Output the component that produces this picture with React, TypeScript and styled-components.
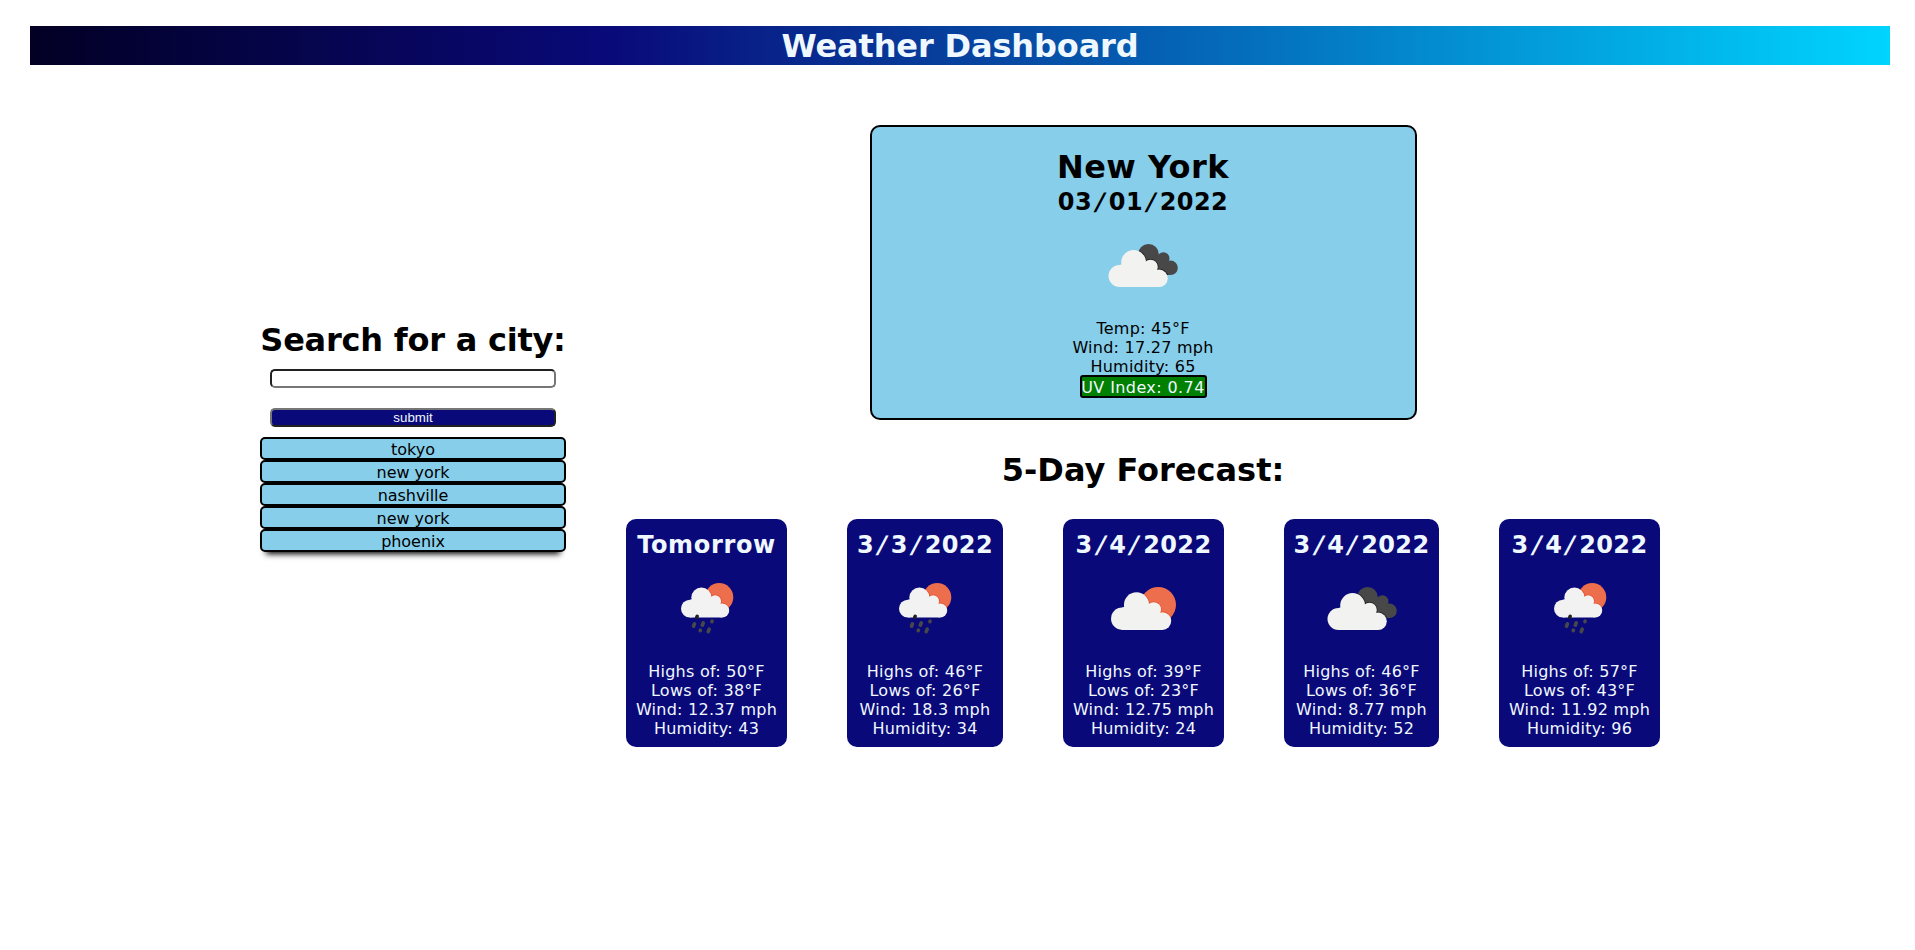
import React, { Fragment } from 'react';
import styled, { createGlobalStyle } from 'styled-components';

const GlobalStyle = createGlobalStyle`
  * { box-sizing: border-box; margin: 0; padding: 0; }
  html { overflow: hidden; }
  body {
    width: 1920px;
    background: #fff;
    color: #000;
    font-family: Verdana, 'DejaVu Sans', sans-serif;
    font-size: 16px;
    line-height: 21px;
  }
`;

const Header = styled.header`
  margin: 26px 30px 30px;
  height: 39px;
  color: aliceblue;
  text-align: center;
  background: linear-gradient(90deg, rgb(2, 0, 36) 0%, rgb(9, 9, 121) 31%, rgb(0, 212, 255) 100%);
`;

const Title = styled.h1<{ $spacing?: number }>`
  height: 39px;
  font-size: 32px;
  line-height: 41px;
  font-weight: bold;
  white-space: nowrap;
  letter-spacing: ${p => p.$spacing ?? 0}px;
`;

const Subtitle = styled.h2<{ $spacing?: number }>`
  height: 29px;
  font-size: 24px;
  line-height: 32px;
  font-weight: bold;
  white-space: nowrap;
  letter-spacing: ${p => p.$spacing ?? 0.4}px;
`;

const Slash = styled.span`
  display: inline-block;
  padding: 0 3.8px;
  transform: skewX(-12deg);
`;

const Main = styled.main`
  display: flex;
  justify-content: center;
  align-items: flex-start;
  gap: 60px;
`;

const Sidebar = styled.aside`
  width: 306px;
  margin-top: 225px;
  text-align: center;
  display: flex;
  flex-direction: column;
`;

const SearchForm = styled.form`
  display: flex;
  flex-direction: column;
  gap: 20px;
  margin: 10px;
`;

const SearchInput = styled.input`
  height: 19px;
  border: 2px inset rgb(118, 118, 118);
  border-radius: 5px;
`;

const SubmitButton = styled.button`
  height: 19px;
  border: 2px outset rgb(118, 118, 118);
  border-radius: 5px;
  background: rgb(9, 9, 121);
  color: aliceblue;
  font: 13.333px/15px Arial, 'Liberation Sans', sans-serif;
`;

const History = styled.ul`
  list-style: none;
  border-radius: 5px;
  box-shadow: 0 8px 6px -6px black;
`;

const HistoryItem = styled.li`
  height: 23px;
  border: 2px solid black;
  border-radius: 5px;
  background: skyblue;
  letter-spacing: -0.05px;
`;

const Content = styled.section`
  display: flex;
  flex-direction: column;
  align-items: center;
  padding-top: 30px;
`;

const CurrentCard = styled.article`
  width: 547px;
  height: 295px;
  padding: 20px;
  border: 2px solid black;
  border-radius: 10px;
  background: skyblue;
  display: flex;
  flex-direction: column;
  align-items: center;
  margin-bottom: 30px;
`;

const UvBadge = styled.p`
  width: 127px;
  height: 23px;
  border: 2px solid black;
  border-radius: 3px;
  background: green;
  color: aliceblue;
  display: flex;
  justify-content: center;
  white-space: nowrap;
  letter-spacing: 0.4px;
`;

const Line = styled.p`
  height: 19px;
  white-space: nowrap;
  letter-spacing: 0.25px;
`;

const Forecast = styled.div`
  display: flex;
  gap: 60px;
  margin-top: 30px;
`;

const DayCard = styled.article<{ $width: number }>`
  width: ${p => p.$width}px;
  height: 228px;
  padding: 10px;
  border-radius: 10px;
  background: rgb(9, 9, 121);
  color: aliceblue;
  display: flex;
  flex-direction: column;
  align-items: center;
`;

const Icon = styled.svg`
  display: block;
  flex: none;
  width: 100px;
  height: 100px;
  margin-bottom: 3px;
`;

type Kind = 'clouds' | 'sun' | 'rain';

function CloudShape() {
  return (
    <>
      <circle cx="26.5" cy="61" r="11" />
      <circle cx="40.6" cy="47.4" r="12.4" />
      <circle cx="57.5" cy="52" r="7.3" />
      <circle cx="66.1" cy="63.3" r="8.7" />
      <path d="M26.5 50L40 46L57.5 51L66.1 60V72H26.5z" />
    </>
  );
}

function DarkCloudShape() {
  return (
    <>
      <circle cx="55.5" cy="39.4" r="10.4" />
      <circle cx="70.4" cy="43.4" r="6.1" />
      <circle cx="77.6" cy="52.8" r="7.2" />
      <path d="M55 40L70 42L78 50L77.6 60H66L50 52z" />
    </>
  );
}

function WeatherIcon({ kind }: { kind: Kind }) {
  if (kind === 'rain') {
    return (
      <Icon viewBox="0.5 0 100 100">
        <clipPath id="rain-sun"><circle cx="62.7" cy="39.2" r="14.1" /></clipPath>
        <circle cx="62.7" cy="39.2" r="14.1" fill="#ec6e4c" />
        <g clipPath="url(#rain-sun)">
          <g transform="translate(11.9 1) scale(.813)" stroke="#e8502e" strokeWidth="1.8"><CloudShape /></g>
        </g>
        <g transform="translate(11.9 1) scale(.813)" fill="#f2f2f2"><CloudShape /></g>
        <g stroke="#484848" strokeWidth="3.6" strokeLinecap="round">
          <path d="M40.7 58.3l-.4 .8" stroke="#222" />
          <path d="M38 65.8l-1 2.4M46.8 64.8l-1 2.4M55.6 63.2l-.2.4M43.9 72.2l-.2.4M52.7 71.2l-1 2.4" />
        </g>
      </Icon>
    );
  }
  if (kind === 'sun') {
    return (
      <Icon viewBox="0.5 0 100 100">
        <clipPath id="day-sun"><circle cx="64.7" cy="46.8" r="17.8" /></clipPath>
        <circle cx="64.7" cy="46.8" r="17.8" fill="#ec6e4c" />
        <g clipPath="url(#day-sun)">
          <g transform="translate(1.8 -1.2) scale(1.015)" stroke="#e8502e" strokeWidth="1.4"><CloudShape /></g>
        </g>
        <g transform="translate(1.8 -1.2) scale(1.015)" fill="#f2f2f0"><CloudShape /></g>
      </Icon>
    );
  }
  return (
    <Icon viewBox="0 0 100 100">
      <clipPath id="dark-cloud"><DarkCloudShape /></clipPath>
      <g fill="#484849"><DarkCloudShape /></g>
      <g clipPath="url(#dark-cloud)">
        <g stroke="#222" strokeWidth="1.6"><CloudShape /></g>
      </g>
      <g fill="#f2f2f0"><CloudShape /></g>
    </Icon>
  );
}

function DateText({ value }: { value: string }) {
  return (
    <>
      {value.split('/').map((part, i) => (
        <Fragment key={i}>
          {i > 0 && <Slash>/</Slash>}
          {part}
        </Fragment>
      ))}
    </>
  );
}

const cities = ['tokyo', 'new york', 'nashville', 'new york', 'phoenix'];

const days: { title: string; kind: Kind; high: number; low: number; wind: string; humidity: number; width: number }[] = [
  { title: 'Tomorrow', kind: 'rain', high: 50, low: 38, wind: '12.37', humidity: 43, width: 161 },
  { title: '3/3/2022', kind: 'rain', high: 46, low: 26, wind: '18.3', humidity: 34, width: 156 },
  { title: '3/4/2022', kind: 'sun', high: 39, low: 23, wind: '12.75', humidity: 24, width: 161 },
  { title: '3/4/2022', kind: 'clouds', high: 46, low: 36, wind: '8.77', humidity: 52, width: 155 },
  { title: '3/4/2022', kind: 'rain', high: 57, low: 43, wind: '11.92', humidity: 96, width: 161 },
];

export default function App() {
  return (
    <>
      <GlobalStyle />
      <Header>
        <Title $spacing={-0.13}>Weather Dashboard</Title>
      </Header>
      <Main>
        <Sidebar>
          <Title $spacing={-0.23}>Search for a city:</Title>
          <SearchForm onSubmit={e => e.preventDefault()}>
            <SearchInput type="text" />
            <SubmitButton type="submit">submit</SubmitButton>
          </SearchForm>
          <History>
            {cities.map((city, i) => (
              <HistoryItem key={i}>{city}</HistoryItem>
            ))}
          </History>
        </Sidebar>
        <Content>
          <CurrentCard>
            <Title $spacing={0.45}>New York</Title>
            <Subtitle><DateText value="03/01/2022" /></Subtitle>
            <WeatherIcon kind="clouds" />
            <Line>Temp: 45°F</Line>
            <Line>Wind: 17.27 mph</Line>
            <Line>Humidity: 65</Line>
            <UvBadge>UV Index: 0.74</UvBadge>
          </CurrentCard>
          <Title>5-Day Forecast:</Title>
          <Forecast>
            {days.map((day, i) => (
              <DayCard key={i} $width={day.width}>
                <Subtitle $spacing={day.title === 'Tomorrow' ? 0.65 : 0.4}>
                  <DateText value={day.title} />
                </Subtitle>
                <WeatherIcon kind={day.kind} />
                <Line>Highs of: {day.high}°F</Line>
                <Line>Lows of: {day.low}°F</Line>
                <Line>Wind: {day.wind} mph</Line>
                <Line>Humidity: {day.humidity}</Line>
              </DayCard>
            ))}
          </Forecast>
        </Content>
      </Main>
    </>
  );
}
